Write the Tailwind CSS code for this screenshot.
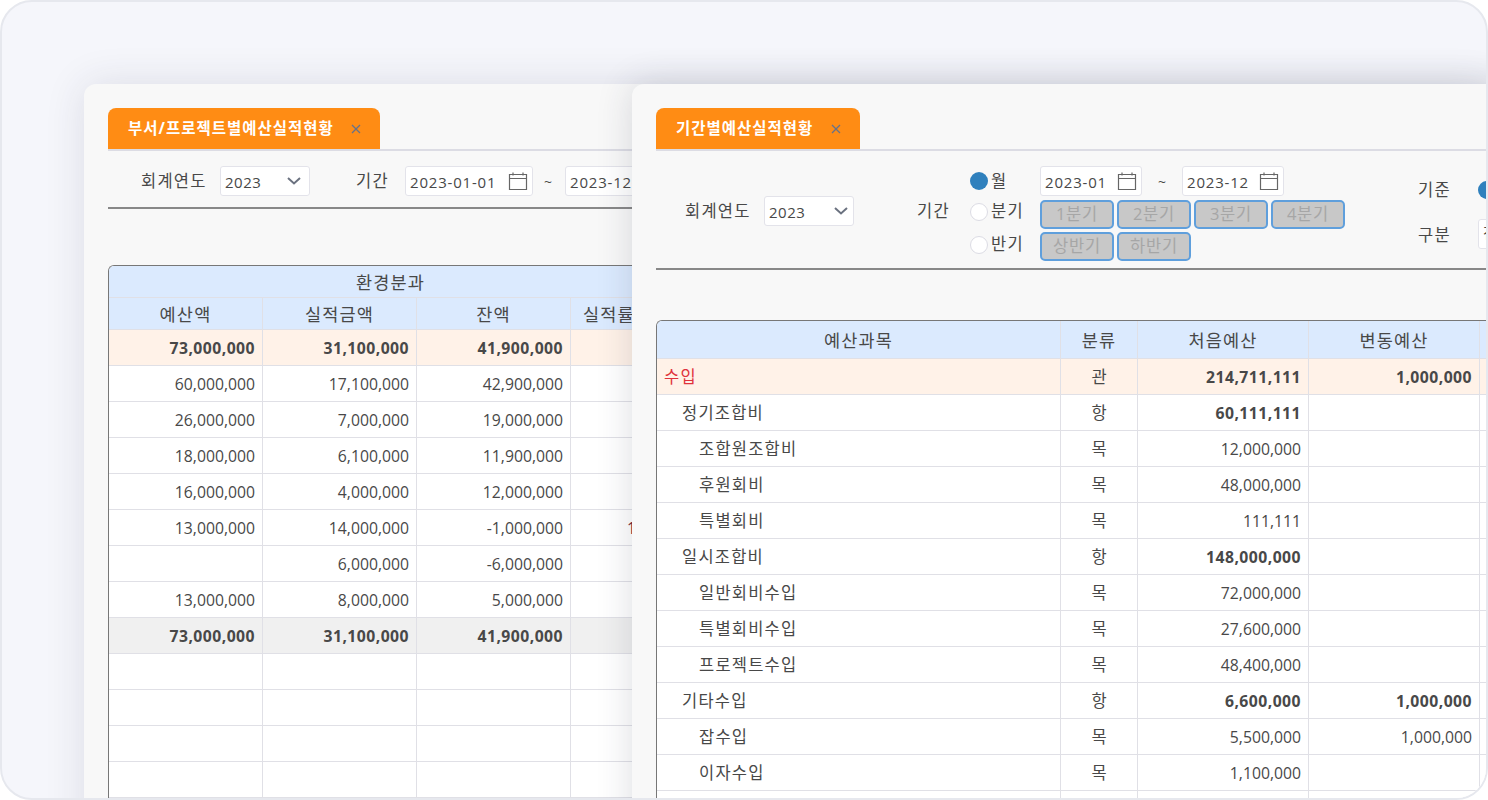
<!DOCTYPE html>
<html lang="ko">

<head>
    <meta charset="UTF-8" />
    <meta name="viewport" content="width=device-width, initial-scale=1.0" />
    <title>예산실적현황</title>
    <script src="https://cdn.jsdelivr.net/npm/@tailwindcss/browser@4"></script>
</head>

<body class="bg-white">
    <div class="relative w-[1488px] h-[800px] overflow-hidden rounded-[32px] border-2 border-[#e6e8ee] bg-[#f5f6fb] text-[15.75px] text-[#484848] font-['Open_Sans','Noto_Sans_CJK_KR',sans-serif]">

        <!-- Window 1 -->
        <div class="absolute left-[82px] top-[82px] w-[1404px] h-[760px] overflow-hidden rounded-tl-xl bg-[#f8f8f8] px-6 pt-6 shadow-[0_0_40px_rgba(40,45,70,0.12)]">
            <div class="border-b-2 border-[#dcdce4] h-[43px]">
                <div class="flex items-center w-[272px] h-[41px] rounded-t-lg bg-[#ff8c14] pl-5 text-white">
                    <span class="font-bold text-[15.5px] tracking-[1px] whitespace-nowrap">부서/프로젝트별예산실적현황</span>
                    <svg class="ml-[16px] w-3 h-3 text-[#66728a]" viewBox="0 0 12 12" fill="none" stroke="currentColor" stroke-width="1.3"><path d="M2 2l8 8M10 2l-8 8" /></svg>
                </div>
            </div>
            <div class="flex items-start h-[58px] border-b-2 border-[#888] pt-[15px]">
                <span class="ml-[33px] w-[79px] h-[30px] leading-[30px] text-[16.5px] tracking-[1.2px] whitespace-nowrap">회계연도</span>
                <div class="flex items-center justify-between w-[90px] h-[30px] rounded-[3px] border border-[#e3e3ea] bg-white pl-[4px] pr-[7px]">
                    <span class="pt-[2px] text-[15px] tracking-[0.5px]">2023</span>
                    <svg class="w-4 h-4 text-[#6b7280]" viewBox="0 0 16 16" fill="none" stroke="currentColor" stroke-width="2"><path d="M2 5l6 5.5L14 5" /></svg>
                </div>
                <span class="ml-[46px] w-[49px] h-[30px] leading-[30px] text-[16.5px] tracking-[1.2px] whitespace-nowrap">기간</span>
                <div class="flex items-center justify-between w-[128px] h-[30px] rounded-[3px] border border-[#e3e3ea] bg-white pl-[4px] pr-[4px]">
                    <span class="pt-[2px] text-[15px] tracking-[0.8px] whitespace-nowrap">2023-01-01</span>
                    <svg class="w-5 h-5 text-[#666]" viewBox="0 0 20 20" fill="none" stroke="currentColor" stroke-width="1.2"><path d="M1.5 3.5h17v15h-17zM1.5 7.5h17M5 1.5v3M15 1.5v3" /></svg>
                </div>
                <span class="ml-[11px] w-[21px] h-[30px] leading-[32px] text-[14px]">~</span>
                <div class="flex items-center w-[128px] h-[30px] rounded-[3px] border border-[#e3e3ea] bg-white pl-[4px] shrink-0">
                    <span class="pt-[2px] text-[15px] tracking-[0.8px] whitespace-nowrap">2023-12-31</span>
                </div>
            </div>
            <div id="table1" class="mt-[56px] w-[566px] rounded-tl-md border-l border-t border-[#777] overflow-hidden"></div>
        </div>

        <!-- Window 2 -->
        <div class="absolute left-[630px] top-[82px] w-[1000px] h-[760px] overflow-hidden rounded-tl-xl bg-[#f8f8f8] px-6 pt-6 shadow-[0_0_36px_rgba(40,45,70,0.16)]">
            <div class="border-b-2 border-[#dcdce4] h-[43px]">
                <div class="flex items-center w-[204px] h-[41px] rounded-t-lg bg-[#ff8c14] pl-5 text-white">
                    <span class="font-bold text-[15.5px] tracking-[1px] whitespace-nowrap">기간별예산실적현황</span>
                    <svg class="ml-[17px] w-3 h-3 text-[#66728a]" viewBox="0 0 12 12" fill="none" stroke="currentColor" stroke-width="1.3"><path d="M2 2l8 8M10 2l-8 8" /></svg>
                </div>
            </div>
            <div class="flex h-[119px] border-b-2 border-[#888]">
                <div class="flex items-center self-start mt-[45px] h-[30px] shrink-0">
                    <span class="ml-[29px] w-[79px] text-[16.5px] tracking-[1.2px] whitespace-nowrap">회계연도</span>
                    <div class="flex items-center justify-between w-[90px] h-[30px] rounded-[3px] border border-[#e3e3ea] bg-white pl-[4px] pr-[4px]">
                        <span class="pt-[2px] text-[15px] tracking-[0.5px]">2023</span>
                        <svg class="w-4 h-4 text-[#6b7280]" viewBox="0 0 16 16" fill="none" stroke="currentColor" stroke-width="2"><path d="M2 5l6 5.5L14 5" /></svg>
                    </div>
                    <span class="ml-[63px] w-[53px] text-[16.5px] tracking-[1.2px] whitespace-nowrap">기간</span>
                </div>

                <!-- radios -->
                <div class="flex flex-col w-[70px] pt-[15px] shrink-0 text-[16.5px]">
                    <div class="flex items-center gap-[3px] h-[30px]"><span class="w-[18px] h-[18px] rounded-full bg-[#2f80bd]"></span><span class="tracking-[1.2px]">월</span></div>
                    <div class="flex items-center gap-[3px] h-[31px]"><span class="w-[18px] h-[18px] rounded-full border border-[#dcdce4] bg-white"></span><span class="tracking-[1.2px]">분기</span></div>
                    <div class="flex items-center gap-[3px] h-[35px]"><span class="w-[18px] h-[18px] rounded-full border border-[#dcdce4] bg-white"></span><span class="tracking-[1.2px]">반기</span></div>
                </div>

                <!-- period inputs and buttons -->
                <div class="flex flex-col w-[378px] pt-[15px] shrink-0">
                    <div class="flex items-center h-[30px]">
                        <div class="flex items-center justify-between w-[102px] h-[30px] rounded-[3px] border border-[#e3e3ea] bg-white pl-[4px] pr-[4px]">
                            <span class="pt-[2px] text-[15px] tracking-[0.8px] whitespace-nowrap">2023-01</span>
                            <svg class="w-5 h-5 text-[#666]" viewBox="0 0 20 20" fill="none" stroke="currentColor" stroke-width="1.2"><path d="M1.5 3.5h17v15h-17zM1.5 7.5h17M5 1.5v3M15 1.5v3" /></svg>
                        </div>
                        <span class="w-[40px] text-center text-[14px]">~</span>
                        <div class="flex items-center justify-between w-[102px] h-[30px] rounded-[3px] border border-[#e3e3ea] bg-white pl-[4px] pr-[4px]">
                            <span class="pt-[2px] text-[15px] tracking-[0.8px] whitespace-nowrap">2023-12</span>
                            <svg class="w-5 h-5 text-[#666]" viewBox="0 0 20 20" fill="none" stroke="currentColor" stroke-width="1.2"><path d="M1.5 3.5h17v15h-17zM1.5 7.5h17M5 1.5v3M15 1.5v3" /></svg>
                        </div>
                    </div>
                    <div class="flex gap-[3px] mt-1">
                        <span class="flex items-center justify-center w-[74px] h-[29px] rounded-[5px] border-2 border-[#5f9fdc] bg-[#c8c8c8] text-[16.5px] text-[#a6a6a6] tracking-[0.8px]">1분기</span>
                        <span class="flex items-center justify-center w-[74px] h-[29px] rounded-[5px] border-2 border-[#5f9fdc] bg-[#c8c8c8] text-[16.5px] text-[#a6a6a6] tracking-[0.8px]">2분기</span>
                        <span class="flex items-center justify-center w-[74px] h-[29px] rounded-[5px] border-2 border-[#5f9fdc] bg-[#c8c8c8] text-[16.5px] text-[#a6a6a6] tracking-[0.8px]">3분기</span>
                        <span class="flex items-center justify-center w-[74px] h-[29px] rounded-[5px] border-2 border-[#5f9fdc] bg-[#c8c8c8] text-[16.5px] text-[#a6a6a6] tracking-[0.8px]">4분기</span>
                    </div>
                    <div class="flex gap-[3px] mt-[3px]">
                        <span class="flex items-center justify-center w-[74px] h-[29px] rounded-[5px] border-2 border-[#5f9fdc] bg-[#c8c8c8] text-[16.5px] text-[#a6a6a6] tracking-[0.8px]">상반기</span>
                        <span class="flex items-center justify-center w-[74px] h-[29px] rounded-[5px] border-2 border-[#5f9fdc] bg-[#c8c8c8] text-[16.5px] text-[#a6a6a6] tracking-[0.8px]">하반기</span>
                    </div>
                </div>

                <!-- basis / type -->
                <div class="flex flex-col shrink-0">
                    <div class="flex items-center mt-[24px] h-[30px]">
                        <span class="w-[60px] text-[16.5px] tracking-[1.2px]">기준</span>
                        <span class="w-[18px] h-[18px] rounded-full bg-[#2f80bd]"></span>
                    </div>
                    <div class="flex items-center mt-[14px] h-[30px]">
                        <span class="w-[60px] pt-[2px] text-[16.5px] tracking-[1.2px]">구분</span>
                        <div class="flex items-center w-[90px] h-[30px] rounded-[3px] border border-[#e3e3ea] bg-white pl-[4px]">전체</div>
                    </div>
                </div>
            </div>
            <div id="table2" class="mt-[50px] w-[925px] rounded-tl-md border-l border-t border-[#777] overflow-hidden"></div>
        </div>
    </div>

    <script>
        const cellLine = 'border-r border-b border-[#e0e0e6] whitespace-nowrap overflow-hidden';
        const headCell = 'border-r border-b border-[#e0e0e6] whitespace-nowrap overflow-hidden font-normal pt-[2px] text-[17.5px] tracking-[1.2px]';

        // Left table
        const leftRows = [
            ['73,000,000', '31,100,000', '41,900,000', '', 'sum'],
            ['60,000,000', '17,100,000', '42,900,000', ''],
            ['26,000,000', '7,000,000', '19,000,000', ''],
            ['18,000,000', '6,100,000', '11,900,000', ''],
            ['16,000,000', '4,000,000', '12,000,000', ''],
            ['13,000,000', '14,000,000', '-1,000,000', '107.69'],
            ['', '6,000,000', '-6,000,000', ''],
            ['13,000,000', '8,000,000', '5,000,000', ''],
            ['73,000,000', '31,100,000', '41,900,000', '', 'total'],
            ['', '', '', ''], ['', '', '', ''], ['', '', '', ''], ['', '', '', ''], ['', '', '', '']
        ];

        let html = `<table class="table-fixed border-separate border-spacing-0 w-[564px]">
            <colgroup><col class="w-[154px]"><col class="w-[154px]"><col class="w-[154px]"><col class="w-[102px]"></colgroup>
            <tr class="h-[32px] bg-[#dbeafe]"><th colspan="4" class="${headCell} text-center">환경분과</th></tr>
            <tr class="h-[32px] bg-[#dbeafe]">
                <th class="${headCell}">예산액</th>
                <th class="${headCell}">실적금액</th>
                <th class="${headCell}">잔액</th>
                <th class="${headCell} text-left pl-3">실적률</th>
            </tr>`;
        leftRows.forEach(r => {
            const kind = r[4];
            const rowClass = kind === 'sum' ? 'bg-[#fff2e8] font-bold tracking-[0.45px]' : kind === 'total' ? 'bg-[#f0f0f0] font-bold tracking-[0.45px]' : 'bg-white';
            html += `<tr class="h-[36px] ${rowClass}">
                <td class="${cellLine} text-right pr-[7px] pt-[2px]">${r[0]}</td>
                <td class="${cellLine} text-right pr-[7px] pt-[2px]">${r[1]}</td>
                <td class="${cellLine} text-right pr-[7px] pt-[2px]">${r[2]}</td>
                <td class="${cellLine} text-left pl-[56px] pt-[2px] text-[#7a2a3a]">${r[3]}</td>
            </tr>`;
        });
        document.getElementById('table1').innerHTML = html + '</table>';

        // Right table: name, level, kind, first budget, changed budget
        const rightRows = [
            ['수입', 0, '관', '214,711,111', '1,000,000'],
            ['정기조합비', 1, '항', '60,111,111', ''],
            ['조합원조합비', 2, '목', '12,000,000', ''],
            ['후원회비', 2, '목', '48,000,000', ''],
            ['특별회비', 2, '목', '111,111', ''],
            ['일시조합비', 1, '항', '148,000,000', ''],
            ['일반회비수입', 2, '목', '72,000,000', ''],
            ['특별회비수입', 2, '목', '27,600,000', ''],
            ['프로젝트수입', 2, '목', '48,400,000', ''],
            ['기타수입', 1, '항', '6,600,000', '1,000,000'],
            ['잡수입', 2, '목', '5,500,000', '1,000,000'],
            ['이자수입', 2, '목', '1,100,000', ''],
            ['', 2, '', '', '']
        ];
        const indent = ['pl-[7px] text-[#e0323c]', 'pl-[25px]', 'pl-[42px]'];

        html = `<table class="table-fixed border-separate border-spacing-0 w-[924px]">
            <colgroup><col class="w-[404px]"><col class="w-[77px]"><col class="w-[171px]"><col class="w-[171px]"><col class="w-[101px]"></colgroup>
            <tr class="h-[38px] bg-[#dbeafe]">
                <th class="${headCell}">예산과목</th>
                <th class="${headCell}">분류</th>
                <th class="${headCell}">처음예산</th>
                <th class="${headCell}">변동예산</th>
                <th class="${headCell}"></th>
            </tr>`;
        rightRows.forEach(r => {
            const bold = r[2] !== '목' ? 'font-bold tracking-[0.45px]' : '';
            html += `<tr class="h-[36px] ${r[1] === 0 ? 'bg-[#fff2e8]' : 'bg-white'}">
                <td class="${cellLine} pt-[2px] text-[16.5px] tracking-[1.2px] ${indent[r[1]]}">${r[0]}</td>
                <td class="${cellLine} pt-[2px] text-center text-[16.5px]">${r[2]}</td>
                <td class="${cellLine} text-right pr-[7px] pt-[2px] ${bold}">${r[3]}</td>
                <td class="${cellLine} text-right pr-[7px] pt-[2px] ${bold}">${r[4]}</td>
                <td class="${cellLine}"></td>
            </tr>`;
        });
        document.getElementById('table2').innerHTML = html + '</table>';
    </script>
</body>

</html>
